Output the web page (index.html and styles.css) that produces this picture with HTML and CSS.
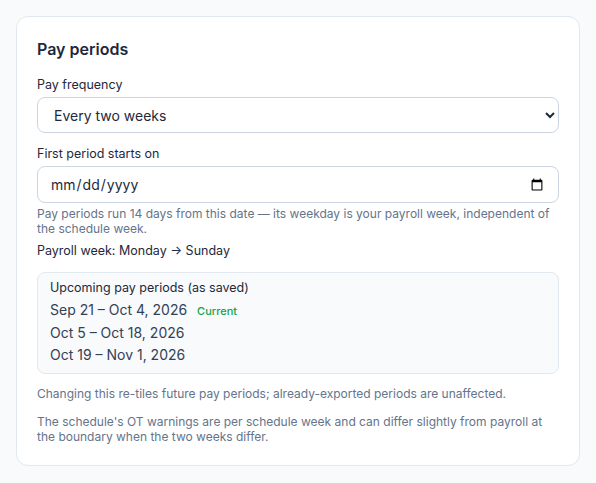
FILE: index.html
```html
<!DOCTYPE html>
<html lang="en">
<head>
  <meta charset="UTF-8">
  <title>Pay periods</title>
  <link rel="stylesheet" href="styles.css">
</head>
<body>

  <div class="karta">
    <h2>Pay periods</h2>

    <div class="pole">
      <label class="etykieta" for="czestotliwosc">Pay frequency</label>
      <select id="czestotliwosc" class="wybor">
        <option>Weekly</option>
        <option selected>Every two weeks</option>
        <option>Twice a month</option>
        <option>Monthly</option>
      </select>
    </div>

    <div class="pole">
      <label class="etykieta" for="start">First period starts on</label>
      <input type="date" id="start" class="wybor data">
      <p class="pomoc">Pay periods run 14 days from this date — its weekday is your payroll week, independent of the schedule week.</p>
      <div class="tydzien">Payroll week: Monday → Sunday</div>
    </div>

    <div class="okresy">
      <div class="okresy-tytul">Upcoming pay periods (as saved)</div>
      <div class="okres">Sep 21 – Oct 4, 2026 <span class="biezacy">Current</span></div>
      <div class="okres">Oct 5 – Oct 18, 2026</div>
      <div class="okres">Oct 19 – Nov 1, 2026</div>
    </div>

    <p class="uwaga">Changing this re-tiles future pay periods; already-exported periods are unaffected.</p>
    <p class="uwaga druga">The schedule's OT warnings are per schedule week and can differ slightly from payroll at the boundary when the two weeks differ.</p>
  </div>

</body>
</html>
```

FILE: styles.css
```css
body {
  margin: 0;
  padding: 16px;
  background: #f8fafc;
  font-family: Inter, 'Noto Sans', sans-serif;
  color: #1e293b;
}

.karta {
  background: #ffffff;
  border: 1px solid #e2e8f0;
  border-radius: 12px;
  padding: 21px 20px 21px;
}

h2 {
  margin: 0;
  font-size: 16px;
  line-height: 22px;
  font-weight: 600;
  color: #1e293b;
}

.pole {
  display: flex;
  flex-direction: column;
  margin-top: 17px;
}

.pole + .pole {
  margin-top: 13px;
}

.etykieta {
  font-size: 12.5px;
  line-height: 16px;
  margin-bottom: 4px;
  color: #1e293b;
}

.wybor {
  height: 36px;
  box-sizing: border-box;
  border: 1px solid #cbd5e1;
  border-radius: 8px;
  background: #ffffff;
  padding: 0 12px;
  font-family: Inter, 'Noto Sans', sans-serif;
  font-size: 14px;
  color: #1e293b;
}

.data {
  height: 37px;
}

.pomoc {
  margin: 4px 0 0;
  font-size: 12px;
  line-height: 14.5px;
  color: #64748b;
}

.tydzien {
  margin-top: 7px;
  font-size: 12.5px;
  line-height: 16px;
  color: #1e293b;
}

.okresy {
  margin-top: 13px;
  background: #f8fafc;
  border: 1px solid #e2e8f0;
  border-radius: 8px;
  padding: 7px 12px;
}

.okresy-tytul {
  font-size: 12.5px;
  line-height: 16px;
  font-weight: 400;
  margin-bottom: 3px;
}

.okres {
  font-size: 14px;
  line-height: 22px;
  color: #334155;
}

.biezacy {
  margin-left: 6px;
  font-size: 11px;
  font-weight: 500;
  color: #16a34a;
}

.uwaga {
  margin: 12px 0 0;
  font-size: 12px;
  line-height: 15px;
  color: #64748b;
}

.uwaga.druga {
  margin-top: 13px;
}
```
